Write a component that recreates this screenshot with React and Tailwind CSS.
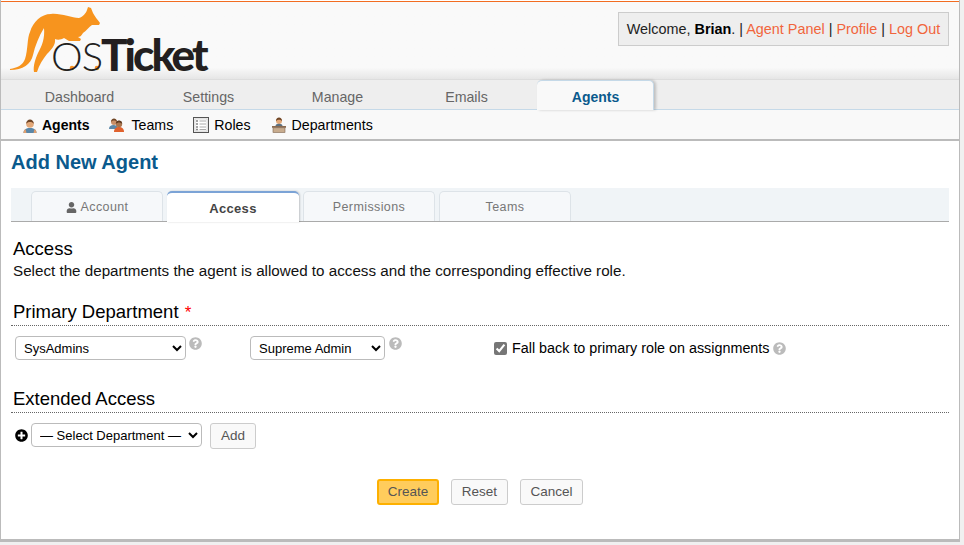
import React from 'react';
import { FaUser, FaQuestionCircle, FaPlusCircle } from 'react-icons/fa';

const mainTabs = ['Dashboard', 'Settings', 'Manage', 'Emails'];
const formTabs = ['Permissions', 'Teams'];

const AgentIcon = () => (
  <svg width="16" height="16" viewBox="0 0 16 16" className="shrink-0">
    <path d="M1.5 15c0-3.5 2.5-5 6.5-5s6.500 1.500 6.500 5z" fill="#5b87a8" />
    <path d="M1.500 15c0-2 .8-3.300 2-4l1 4zM14.500 15c0-2-.8-3.300-2-4l-1 4z" fill="#e0a070" />
    <circle cx="8" cy="6" r="3.800" fill="#e3a878" />
    <path d="M4.200 6c0-3 1.800-4.500 3.800-4.500s3.800 1.500 3.800 4.500c-1-1.500-2-2-3.800-2s-2.800.5-3.800 2z" fill="#6e4526" />
  </svg>
);

const TeamIcon = () => (
  <svg width="16" height="16" viewBox="0 0 16 16" className="shrink-0">
    <path d="M0 12c0-3 2-4 4.500-4S9 9 9 12z" fill="#5b87a8" />
    <circle cx="5" cy="5" r="3" fill="#c99068" />
    <path d="M2 5c0-2 1.500-3.500 3-3.500S8 3 8 5C7 3.800 6 3.500 5 3.500S3 3.800 2 5z" fill="#6e4526" />
    <path d="M5 15c0-3.500 2-5 5-5s5 1.500 5 5z" fill="#e0622e" />
    <circle cx="10" cy="7" r="3.200" fill="#a8754f" />
    <path d="M6.800 7c0-2.500 1.500-3.500 3.200-3.500s3.200 1 3.200 3.500c-1-1-2-1.500-3.200-1.500S7.800 6 6.800 7z" fill="#5c3a20" />
  </svg>
);

const RolesIcon = () => (
  <svg width="16" height="16" viewBox="0 0 16 16" className="shrink-0">
    <rect x="0.500" y="0.500" width="15" height="15" fill="#f2f2f2" stroke="#555" />
    <rect x="2" y="2" width="12" height="12" fill="#fff" stroke="#bbb" strokeWidth="0.500" />
    <path d="M3 4h2M3 7h2M3 10h2M3 12.500h2" stroke="#888" strokeWidth="1.300" />
    <path d="M6.500 4H13M6.500 7H13M6.500 10H13M6.500 12.500H13" stroke="#aaa" strokeWidth="1" />
  </svg>
);

const DeptIcon = () => (
  <svg width="16" height="16" viewBox="0 0 16 16" className="shrink-0">
    <circle cx="8" cy="4" r="3" fill="#e3a878" />
    <path d="M5 4c0-2 1.300-3.500 3-3.500S11 2 11 4c-1-1-2-1.300-3-1.300S6 3 5 4z" fill="#6e4526" />
    <path d="M4.500 9c0-1.500 1.500-2.200 3.500-2.200s3.500.7 3.500 2.200z" fill="#5b6f7f" />
    <rect x="1" y="9" width="14" height="1.800" fill="#8a6a50" />
    <rect x="2" y="10.800" width="12" height="4.700" fill="#c8ac8e" stroke="#7f6650" strokeWidth="0.600" />
  </svg>
);

// kangaroo and the two dots of the logo, text stays real text
const Logo = () => (
  <div className="relative h-[77px] w-[215px] shrink-0">
    <svg width="215" height="77" viewBox="0 2 215 77" className="absolute left-0 top-0">
      <path
        fill="#f7941e"
        d="M9 69C16 68 22 65 24 59C27 50 26 38 29 32C32 22 40 14 50 14C60 13 70 18 78 18C82 17 85 13 86 10L87 7L90 8L92 13C94 17 97 20 99 23L98 25L91 25C88 27 85 31 82 33C80 36 79 37 77 37L80 39L79 41L68 41L63 38C60 40 56 40 54 39C55 45 50 50 46 54C42 59 38 65 36 72L33 72C32 66 34 60 37 53C41 46 44 38 43 28C38 36 34 46 32 55C30 64 22 70 9 70Z"
      />
      <circle cx="71" cy="68" r="2.300" fill="#f7941e" />
      <circle cx="96" cy="68" r="2.300" fill="#f7941e" />
    </svg>
    <div className="absolute left-[50px] top-[22px] flex items-baseline font-['Lato',sans-serif] text-[#231f20]">
      <span className="text-[40px] font-light leading-[60px] tracking-[-1px]">OS</span>
      <span className="ml-[-1px] text-[44px] font-black leading-[60px] tracking-[-2.900px]">Ticket</span>
    </div>
  </div>
);

const Help = () => <FaQuestionCircle className="shrink-0 text-[13px] text-[#bbb]" />;

export default function App() {
  return (
    <div className="h-[545px] w-[964px] overflow-hidden bg-[#f0f0f0] font-['Liberation_Sans',Arial,sans-serif]">
      <div className="h-[542px] w-[960px] border-b-[3px] border-l border-r border-[#bbb] bg-white pt-px">
        <div className="h-px bg-[#f26c21]" />
        <header className="flex h-[77px] justify-between bg-gradient-to-b from-[#f9f9f9] from-85% to-[#e6e6e6]">
          <Logo />
          <div className="mr-[10px] mt-[10px] flex h-[34px] w-[331px] items-center justify-center border border-[#ccc] bg-[#eee] pt-[2px] text-[14.400px] text-[#222]">
            <span>
              Welcome, <b className="text-black">Brian</b>. | <a className="text-[#f1653c]">Agent Panel</a> | <a className="text-[#f1653c]">Profile</a> | <a className="text-[#f1653c]">Log Out</a>
            </span>
          </div>
        </header>
        <nav className="flex h-[31px] gap-3 border-b border-t border-b-[#c5d9e8] border-t-[#ddd] bg-[#eee] pl-[20px]">
          {mainTabs.map((t) => (
            <div key={t} className="flex h-[29px] w-[117px] items-center justify-center pt-[6px] text-[14.200px] text-[#666]">{t}</div>
          ))}
          <div className="z-10 flex h-[30px] w-[117px] items-center justify-center rounded-t-[5px] border-r border-t border-[#c5d9e8] bg-[#f9f9f9] pl-[1px] pt-[3px] text-[14px] font-bold text-[#0a5a8d] shadow-[2px_0_3px_rgba(0,0,0,0.2)]">Agents</div>
        </nav>
        <div className="flex h-[31px] items-center gap-[20px] border-b-2 border-[#bbb] bg-[#f9f9f9] pl-[21px] pt-[2px] text-[14.200px] text-black">
          <span className="flex items-center gap-[4px] font-bold"><AgentIcon /><span className="text-[14px]">Agents</span></span>
          <span className="flex items-center gap-[6px]"><TeamIcon />Teams</span>
          <span className="flex items-center gap-[5px]"><RolesIcon />Roles</span>
          <span className="flex items-center gap-[5px]"><DeptIcon />Departments</span>
        </div>

        <main className="px-[10px]">
          <h2 className="mt-[8px] h-[26px] text-[20px] font-bold leading-[26px] text-[#0a5a8d]">Add New Agent</h2>

          <div className="mt-[13px] flex h-[34px] w-[938px] items-end gap-1 border-b border-[#aaa] bg-[#f0f4f7] pl-[20px]">
            <div className="flex h-[30px] w-[132px] items-center justify-center gap-1 rounded-t-[5px] border border-b-0 border-[#dde3e8] bg-[#f6f8fa] pt-[1px] text-[12.500px] tracking-[0.4px] text-[#777]">
              <FaUser className="text-[11px] text-[#666]" /> Account
            </div>
            <div className="z-10 mb-[-1px] flex h-[31px] w-[132px] items-center justify-center rounded-t-[5px] border-t-2 border-[#7ba3d6] bg-white pt-[3px] text-[13px] font-bold tracking-[0.3px] text-[#444] shadow-[1px_0_2px_rgba(0,0,0,0.2)]">Access</div>
            {formTabs.map((t) => (
              <div key={t} className="flex h-[30px] w-[132px] items-center justify-center rounded-t-[5px] border border-b-0 border-[#dde3e8] bg-[#f6f8fa] pt-[1px] text-[12.500px] tracking-[0.4px] text-[#777]">{t}</div>
            ))}
          </div>

          <div className="w-[938px] pl-[2px] pt-[16px] text-black">
            <h3 className="h-[22px] text-[18.500px] leading-[22px]">Access</h3>
            <p className="mt-[1px] h-[20px] text-[15.200px] leading-[20px] text-[#111]">Select the departments the agent is allowed to access and the corresponding effective role.</p>
          </div>

          <div className="mt-[19px] w-[938px]">
            <div className="h-[26px] border-b border-dotted border-[#666] pl-[2px] text-[18.500px] leading-[24px] text-black">
              Primary Department <span className="ml-[1px] text-[17px] text-[#f00]">*</span>
            </div>
            <div className="mt-[10px] flex h-[26px] pl-[4px]">
              <select className="h-[24px] w-[171px] rounded-[4px] border border-[#bbb] bg-white pl-1 text-[13px] text-black">
                <option>SysAdmins</option>
              </select>
              <span className="ml-[3px] mt-px"><Help /></span>
              <select className="ml-[48px] h-[24px] w-[135px] rounded-[4px] border border-[#bbb] bg-white pl-1 text-[13px] text-black">
                <option>Supreme Admin</option>
              </select>
              <span className="ml-[4px] mt-px"><Help /></span>
              <label className="ml-[92px] mt-[2px] flex h-[20px] items-center text-[14.350px] text-black">
                <input type="checkbox" defaultChecked className="h-[13px] w-[13px] accent-[#767676]" />
                <span className="ml-[5px] pt-[1px]">Fall back to primary role on assignments</span>
                <span className="ml-[3px]"><Help /></span>
              </label>
            </div>
          </div>

          <div className="mt-[26px] w-[938px]">
            <div className="h-[25px] border-b border-dotted border-[#666] pl-[2px] text-[18.500px] leading-[22px] text-black">Extended Access</div>
            <div className="mt-[10px] flex h-[26px] items-start pl-[4px]">
              <FaPlusCircle className="mt-[6px] text-[13px] text-black" />
              <select className="ml-[3px] h-[24px] w-[171px] rounded-[4px] border border-[#bbb] bg-white pl-1 text-[13px] text-black">
                <option>— Select Department —</option>
              </select>
              <button className="ml-[8px] h-[26px] w-[46px] rounded-[3px] border border-[#ccc] bg-[#f9f9f9] text-[13.500px] text-[#555]">Add</button>
            </div>
          </div>

          <div className="mt-[30px] flex w-[938px] justify-center gap-3">
            <button className="h-[26px] w-[62px] rounded-[3px] border-2 border-[#fdb000] bg-[#ffcc5c] text-[13.500px] text-[#555]">Create</button>
            <button className="h-[26px] w-[57px] rounded-[3px] border border-[#ccc] bg-[#f9f9f9] text-[13.500px] text-[#555]">Reset</button>
            <button className="h-[26px] w-[63px] rounded-[3px] border border-[#ccc] bg-[#f9f9f9] text-[13.500px] text-[#555]">Cancel</button>
          </div>
        </main>
      </div>
    </div>
  );
}
